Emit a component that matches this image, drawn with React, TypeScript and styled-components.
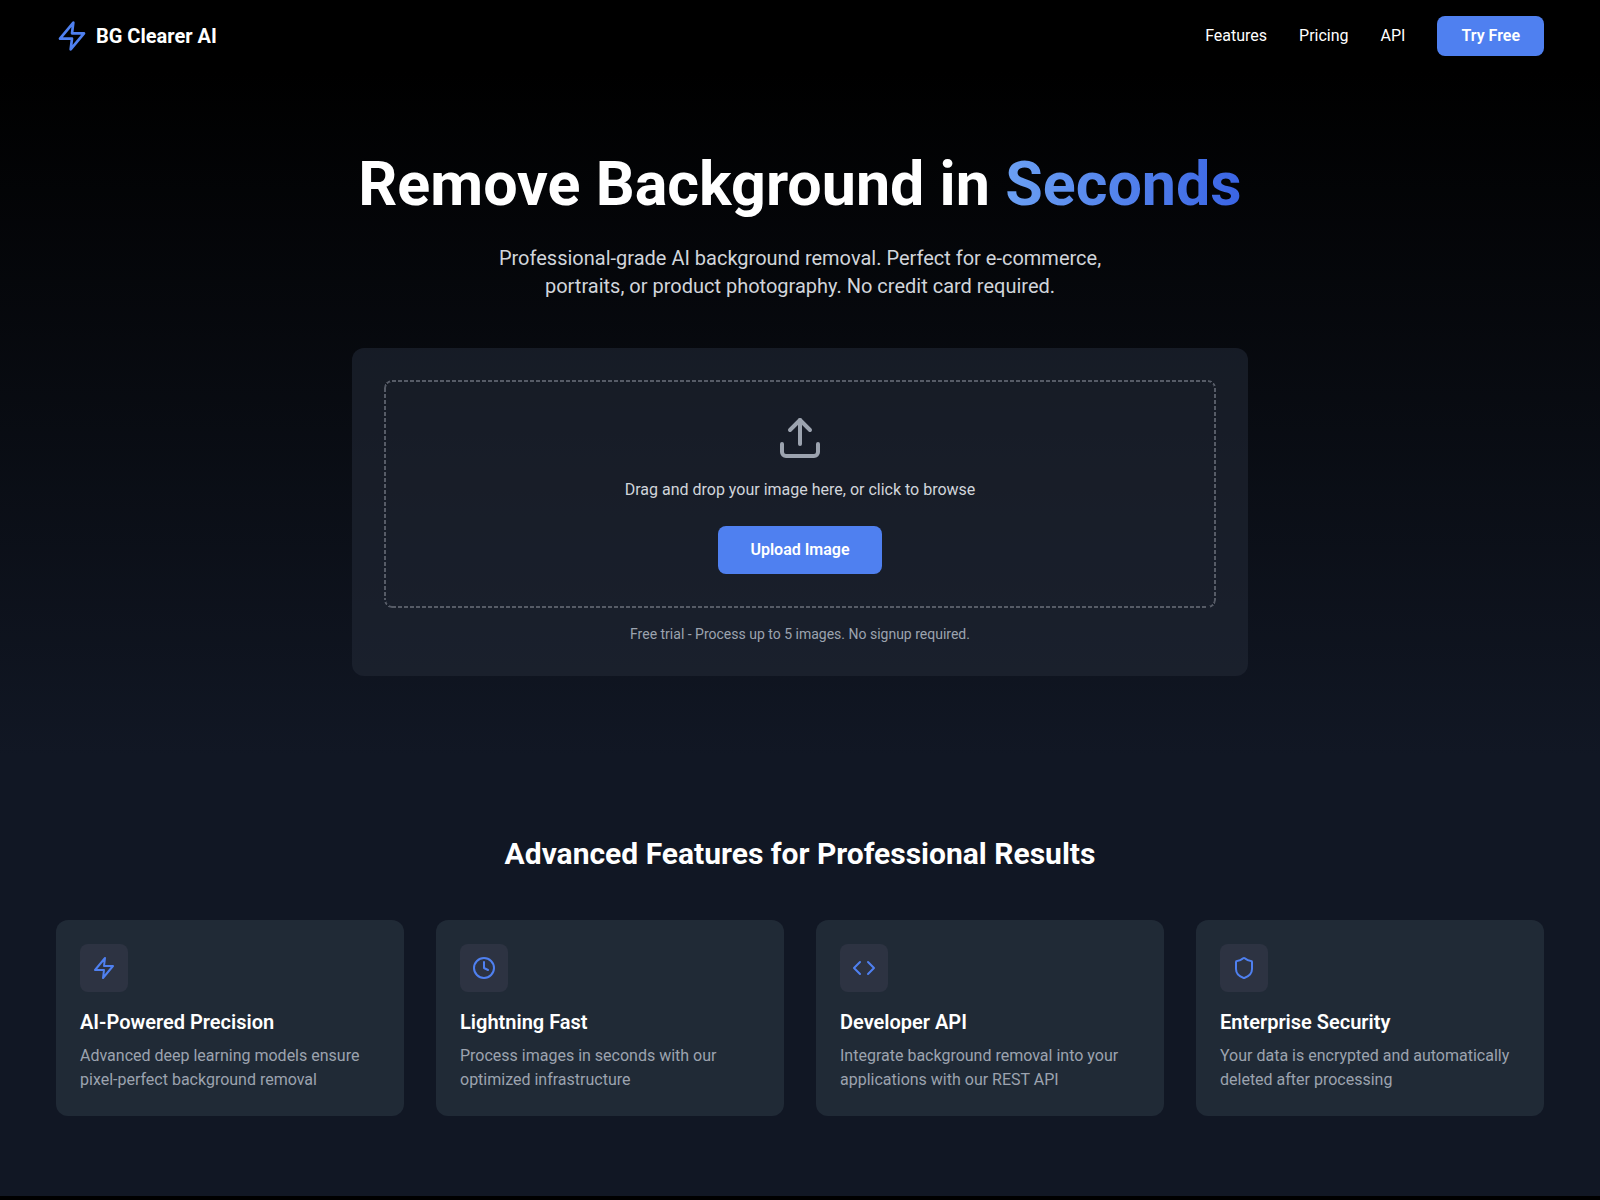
import React from 'react';
import styled, { createGlobalStyle } from 'styled-components';
import { Upload, Clock, Code, Shield } from 'lucide-react';

const GlobalStyle = createGlobalStyle`
  *, *::before, *::after { box-sizing: border-box; }
  html { background: #000; }
  body {
    margin: 0;
    color: #fff;
    font-family: Roboto, Inter, 'Liberation Sans', sans-serif;
    font-size: 16px;
    line-height: 24px;
    -webkit-font-smoothing: antialiased;
  }
  h1, h2, h3, p { margin: 0; padding: 0; }
  button { border: 0; font: inherit; color: inherit; cursor: pointer; }
`;

const Header = styled.header`
  background: #000;
`;

const Nav = styled.nav`
  display: flex;
  align-items: center;
  justify-content: space-between;
  padding: 16px 56px;
`;

const Brand = styled.a`
  display: flex;
  align-items: center;
  gap: 8px;
  color: #fff;
  font-size: 20px;
  line-height: 28px;
  font-weight: 700;
  text-decoration: none;

  svg { color: #4f80f0; }
`;

const NavLinks = styled.div`
  display: flex;
  align-items: center;
  gap: 32px;
`;

const NavLink = styled.a`
  color: #fff;
  text-decoration: none;
`;

const Button = styled.button<{ $large?: boolean }>`
  padding: ${(p) => (p.$large ? '12px 32px' : '8px 24px')};
  border-radius: 8px;
  background: #4f80f0;
  color: #fff;
  font-weight: 600;
`;

const Hero = styled.section`
  padding: 80px 56px;
  background: linear-gradient(to bottom, #000, #111724);
  text-align: center;
`;

const Title = styled.h1`
  margin-bottom: 28px;
  font-size: 61px;
  line-height: 64px;
  font-weight: 700;
`;

const Accent = styled.span`
  background: linear-gradient(to right, #6ba0f3, #3a64e4);
  background-clip: text;
  -webkit-background-clip: text;
  color: transparent;
`;

const Lead = styled.p`
  max-width: 672px;
  margin: 0 auto 48px;
  color: #d1d5db;
  font-size: 20px;
  line-height: 28px;
`;

const UploadCard = styled.div`
  max-width: 896px;
  margin: 0 auto;
  padding: 32px;
  border-radius: 12px;
  background: rgba(34, 40, 54, 0.6);
`;

const DropZone = styled.div`
  position: relative;
  display: flex;
  flex-direction: column;
  align-items: center;
  padding: 34px;
  color: #d1d5db;

  > svg { margin-bottom: 16px; color: #9ca3af; }
  > p { margin-bottom: 24px; }

  /* Fine 4px/2px dashes: a solid ring cut by striped masks, one per edge and corner. */
  &::before {
    content: '';
    position: absolute;
    inset: 0;
    border: 2px solid #565b66;
    border-radius: 8px;
    pointer-events: none;
    mask:
      repeating-linear-gradient(90deg, #000 0 4px, transparent 4px 6px) 8px 0 / calc(100% - 16px) 2px no-repeat,
      repeating-linear-gradient(90deg, #000 0 4px, transparent 4px 6px) 8px 100% / calc(100% - 16px) 2px no-repeat,
      repeating-linear-gradient(180deg, #000 0 4px, transparent 4px 6px) 0 8px / 2px calc(100% - 16px) no-repeat,
      repeating-linear-gradient(180deg, #000 0 4px, transparent 4px 6px) 100% 8px / 2px calc(100% - 16px) no-repeat,
      repeating-conic-gradient(at 100% 100%, #000 0 30deg, transparent 30deg 45deg) 0 0 / 8px 8px no-repeat,
      repeating-conic-gradient(at 0 100%, #000 0 30deg, transparent 30deg 45deg) 100% 0 / 8px 8px no-repeat,
      repeating-conic-gradient(at 100% 0, #000 0 30deg, transparent 30deg 45deg) 0 100% / 8px 8px no-repeat,
      repeating-conic-gradient(at 0 0, #000 0 30deg, transparent 30deg 45deg) 100% 100% / 8px 8px no-repeat;
    mask-origin: border-box;
    mask-clip: border-box;
  }
`;

const Note = styled.p`
  margin-top: 16px;
  color: #9ca3af;
  font-size: 14px;
  line-height: 20px;
`;

const Features = styled.section`
  padding: 80px 56px;
  background: #111724;
`;

const SectionTitle = styled.h2`
  margin-bottom: 48px;
  font-size: 30px;
  line-height: 36px;
  font-weight: 700;
  text-align: center;
`;

const Grid = styled.div`
  display: grid;
  grid-template-columns: repeat(auto-fit, minmax(280px, 1fr));
  gap: 32px;
`;

const Card = styled.article`
  padding: 24px;
  border-radius: 12px;
  background: #202a36;
`;

const IconTile = styled.div`
  display: flex;
  align-items: center;
  justify-content: center;
  width: 48px;
  height: 48px;
  margin-bottom: 16px;
  border-radius: 8px;
  background: #2d3342;
  color: #4f80f0;
`;

const CardTitle = styled.h3`
  margin-bottom: 8px;
  font-size: 20px;
  line-height: 28px;
  font-weight: 600;
`;

const CardText = styled.p`
  color: #9ca3af;
`;

function Bolt({ size }: { size: number }) {
  return (
    <svg
      width={size}
      height={size}
      viewBox="0 0 24 24"
      fill="none"
      stroke="currentColor"
      strokeWidth="2"
      strokeLinecap="round"
      strokeLinejoin="round"
      aria-hidden="true"
    >
      <polygon points="13 2 3 14 12 14 11 22 21 10 12 10 13 2" />
    </svg>
  );
}

const features = [
  { icon: Bolt, title: 'AI-Powered Precision', text: 'Advanced deep learning models ensure pixel-perfect background removal' },
  { icon: Clock, title: 'Lightning Fast', text: 'Process images in seconds with our optimized infrastructure' },
  { icon: Code, title: 'Developer API', text: 'Integrate background removal into your applications with our REST API' },
  { icon: Shield, title: 'Enterprise Security', text: 'Your data is encrypted and automatically deleted after processing' },
];

export default function App() {
  return (
    <>
      <GlobalStyle />
      <Header>
        <Nav>
          <Brand href="#">
            <Bolt size={32} />
            BG Clearer AI
          </Brand>
          <NavLinks>
            <NavLink href="#features">Features</NavLink>
            <NavLink href="#pricing">Pricing</NavLink>
            <NavLink href="#api">API</NavLink>
            <Button type="button">Try Free</Button>
          </NavLinks>
        </Nav>
      </Header>
      <main>
        <Hero>
          <Title>
            Remove Background in <Accent>Seconds</Accent>
          </Title>
          <Lead>
            Professional-grade AI background removal. Perfect for e-commerce, portraits, or product photography. No
            credit card required.
          </Lead>
          <UploadCard>
            <DropZone>
              <Upload size={48} />
              <p>Drag and drop your image here, or click to browse</p>
              <Button type="button" $large>
                Upload Image
              </Button>
            </DropZone>
            <Note>Free trial - Process up to 5 images. No signup required.</Note>
          </UploadCard>
        </Hero>
        <Features id="features">
          <SectionTitle>Advanced Features for Professional Results</SectionTitle>
          <Grid>
            {features.map(({ icon: Icon, title, text }) => (
              <Card key={title}>
                <IconTile>
                  <Icon size={24} />
                </IconTile>
                <CardTitle>{title}</CardTitle>
                <CardText>{text}</CardText>
              </Card>
            ))}
          </Grid>
        </Features>
      </main>
    </>
  );
}
